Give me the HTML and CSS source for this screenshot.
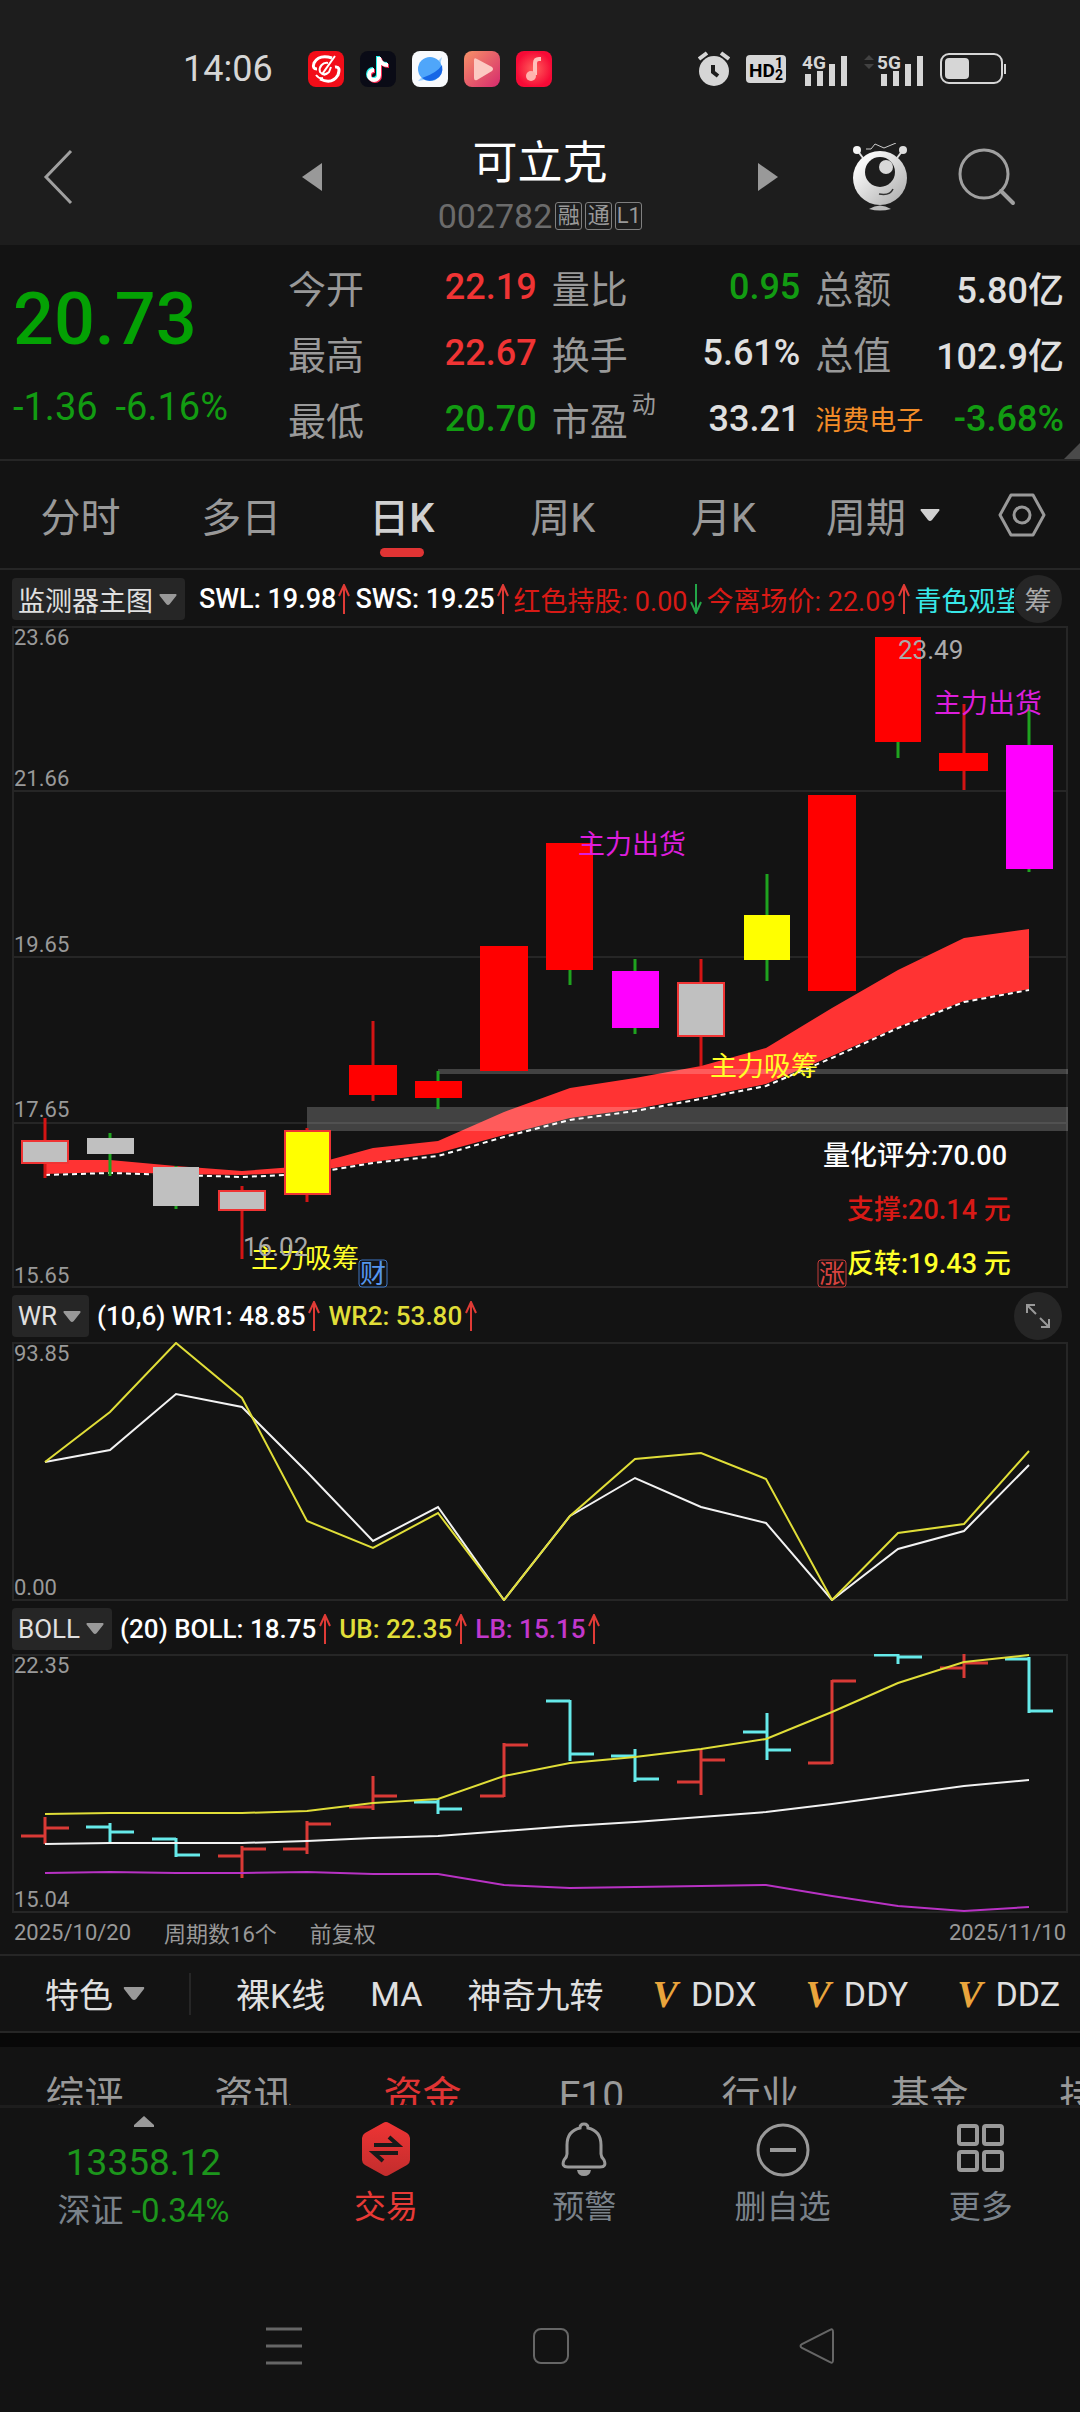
FILE: index.html
```
<!DOCTYPE html>
<html lang="zh-CN">
<head>
    <meta charset="UTF-8">
    <meta name="viewport" content="width=device-width, initial-scale=1.0">
    <title>可立克 002782</title>
    <link rel="stylesheet" href="styles.css">
</head>
<body>
    <!-- Shared icons -->
    <svg class="defs" width="0" height="0" aria-hidden="true">
        <symbol id="arrow-up" viewBox="0 0 12 30"><path d="M6 30V2M1 12L6 1l5 11" fill="none" stroke="#e03b36" stroke-width="2"/></symbol>
        <symbol id="arrow-down" viewBox="0 0 12 30"><path d="M6 0v28M1 18l5 11 5-11" fill="none" stroke="#23a648" stroke-width="2"/></symbol>
        <symbol id="caret" viewBox="0 0 20 12"><path d="M1 0h18q1 1 0 2l-7 9q-2 2-4 0L1 2q-1-1 0-2z" fill="currentColor"/></symbol>
    </svg>

    <div class="top">
        <div class="status">
            <span class="time">14:06</span>
            <div class="apps">
                <svg viewBox="0 0 36 36"><rect width="36" height="36" rx="8" fill="#f20d18"/><path d="M24 7Q11 3 6 12q-2 6 3 6M12 28q12 6 18-4 3-9-3-8" fill="none" stroke="#fff" stroke-width="3"/><path d="M27 5L15 22q1 3 4 0" fill="none" stroke="#fff" stroke-width="2"/><path d="M20 12a7 7 0 0 0-8 9q4 5 9 0l2-5M8 24q3 4 7 3" fill="none" stroke="#fff" stroke-width="2"/></svg>
                <svg viewBox="0 0 36 36"><rect width="36" height="36" rx="8" fill="#0a0b16"/><path d="M18 5v18a5 5 0 1 1-5-5M18 6q2 7 9 7" fill="none" stroke="#25f4ee" stroke-width="4"/><path d="M20 7v18a5 5 0 1 1-5-5M20 8q2 7 9 7" fill="none" stroke="#fe2c55" stroke-width="4"/><path d="M19 6v18a5 5 0 1 1-5-5M19 7q2 7 9 7" fill="none" stroke="#fff" stroke-width="4"/></svg>
                <svg viewBox="0 0 36 36"><rect width="36" height="36" rx="8" fill="#f8fafd"/><path d="M6 30L30 6l-3 12-9 10z" fill="#9fd0fb"/><circle cx="18" cy="18" r="12" fill="#4fa6fa"/><path d="M10 27Q25 22 30 14q2 10-6 14-7 4-14-1z" fill="#1667e6"/></svg>
                <svg viewBox="0 0 36 36"><defs><linearGradient id="g-video" x2="1" y2="1"><stop stop-color="#f79268"/><stop offset="1" stop-color="#d62a6d"/></linearGradient></defs><rect width="36" height="36" rx="8" fill="url(#g-video)"/><path d="M10 9q0-3 3-1l15 8q2 2 0 4l-15 9q-3 1-3-2z" fill="#fcc9c2"/></svg>
                <svg viewBox="0 0 36 36"><defs><radialGradient id="g-music"><stop stop-color="#ff625c"/><stop offset="1" stop-color="#f60a36"/></radialGradient></defs><rect width="36" height="36" rx="8" fill="url(#g-music)"/><path d="M25 8h-2q-4 0-4 4v12" fill="none" stroke="#ffc0bb" stroke-width="4"/><ellipse cx="15" cy="25" rx="5" ry="5" fill="#ffb3ae"/></svg>
            </div>
            <div class="signals">
                <svg width="32" height="36" viewBox="0 0 32 36"><circle cx="16" cy="20" r="15" fill="#d6d6d6"/><path d="M1 8l8-6M31 8l-8-6" stroke="#d6d6d6" stroke-width="4"/><path d="M15 14v7l5 4" fill="none" stroke="#1d1d1d" stroke-width="4"/></svg>
                <svg width="40" height="28" viewBox="0 0 40 28"><rect width="40" height="28" rx="4" fill="#d6d6d6"/><text x="3" y="22" class="hd">HD</text><text x="29" y="13" class="hd-sub">1</text><text x="29" y="25" class="hd-sub">2</text></svg>
                <svg width="46" height="36" viewBox="0 0 46 36"><text x="0" y="18" class="net">4G</text><path d="M6 23v12M18 20v15M30 13v22M42 5v30" stroke="#d6d6d6" stroke-width="6"/></svg>
                <svg width="60" height="36" viewBox="0 0 60 36"><path d="M0 9l5-5 5 5zM0 13h10l-5 5z" fill="#424242"/><text x="13" y="18" class="net">5G</text><path d="M20 23v12M32 20v15M44 13v22M56 5v30" stroke="#d6d6d6" stroke-width="6"/></svg>
                <svg width="67" height="32" viewBox="0 0 67 32"><rect x="1" y="1" width="61" height="29" rx="8" fill="none" stroke="#d6d6d6" stroke-width="2"/><rect x="5" y="5" width="24" height="21" rx="4" fill="#d6d6d6"/><path d="M65 11v10" stroke="#d6d6d6" stroke-width="2"/></svg>
            </div>
        </div>

        <header class="header">
            <button class="back" aria-label="返回"><svg width="30" height="56" viewBox="0 0 30 56"><path d="M28 2L3 28l25 26" fill="none" stroke="#a0a0a0" stroke-width="3"/></svg></button>
            <div class="switcher">
                <button aria-label="上一只"><svg width="20" height="28" viewBox="0 0 20 28"><path d="M20 0v28L0 14z" fill="#999"/></svg></button>
                <div class="stock">
                    <h1>可立克</h1>
                    <div class="code">002782 <span>融</span><span>通</span><span>L1</span></div>
                </div>
                <button aria-label="下一只"><svg width="20" height="28" viewBox="0 0 20 28"><path d="M0 0v28l20-14z" fill="#999"/></svg></button>
            </div>
            <div class="tools">
                <button aria-label="智能助手"><svg width="56" height="68" viewBox="0 0 56 68"><defs><linearGradient id="g-bot" x2="1" y2="1"><stop offset="0.2" stop-color="#f8f8f8"/><stop offset="1" stop-color="#a8a8a8"/></linearGradient></defs><path d="M5 7l6 8M51 7l-6 8" stroke="#ddd" stroke-width="2"/><path d="M14 6h5l4-5 9 4 12-5" fill="none" stroke="#ccc" stroke-width="1"/><circle cx="5" cy="7" r="4" fill="#f4f4f4"/><circle cx="51" cy="7" r="4" fill="#ddd"/><circle cx="28" cy="35" r="27" fill="url(#g-bot)"/><circle cx="28" cy="29" r="15" fill="#1d1d1d"/><circle cx="34" cy="24" r="7" fill="#d8d8d8"/><path d="M27 51q11 2 14-5" fill="none" stroke="#333" stroke-width="1.5"/><path d="M17 66q11-7 22 0-11 3-22 0z" fill="#bbb"/></svg></button>
                <button aria-label="搜索"><svg width="58" height="58" viewBox="0 0 58 58"><circle cx="26" cy="26" r="24" fill="none" stroke="#a0a0a0" stroke-width="3"/><path d="M43 43l12 12" stroke="#a0a0a0" stroke-width="4" stroke-linecap="round"/></svg></button>
            </div>
        </header>
    </div>

    <section class="quote">
        <div class="price">
            <div class="last">20.73</div>
            <div class="change"><span>-1.36</span><span>-6.16%</span></div>
        </div>
        <dl>
            <div><dt>今开</dt><dd class="up">22.19</dd></div>
            <div><dt>最高</dt><dd class="up">22.67</dd></div>
            <div><dt>最低</dt><dd class="down">20.70</dd></div>
        </dl>
        <dl>
            <div><dt>量比</dt><dd class="down">0.95</dd></div>
            <div><dt>换手</dt><dd>5.61%</dd></div>
            <div><dt>市盈<sup>动</sup></dt><dd>33.21</dd></div>
        </dl>
        <dl>
            <div><dt>总额</dt><dd>5.80亿</dd></div>
            <div><dt>总值</dt><dd>102.9亿</dd></div>
            <div><dt class="sector">消费电子</dt><dd class="down">-3.68%</dd></div>
        </dl>
        <span class="corner"></span>
    </section>

    <nav class="periods">
        <button>分时</button>
        <button>多日</button>
        <button class="active">日K</button>
        <button>周K</button>
        <button>月K</button>
        <button class="more-periods">周期 <svg width="24" height="12"><use href="#caret"/></svg></button>
        <button class="settings" aria-label="设置"><svg width="48" height="44" viewBox="0 0 48 44"><path d="M13 2h22l11 20-11 20H13L2 22z" fill="none" stroke="#999" stroke-width="3" stroke-linejoin="round"/><circle cx="24" cy="22" r="8" fill="none" stroke="#999" stroke-width="3"/></svg></button>
    </nav>

    <main class="charts">
        <div class="info main-info">
            <button class="pick">监测器主图<svg width="18" height="11"><use href="#caret"/></svg></button>
            <div class="values">
                <span class="white">SWL: 19.98<svg><use href="#arrow-up"/></svg></span>
                <span class="white">SWS: 19.25<svg><use href="#arrow-up"/></svg></span>
                <span class="red">红色持股: 0.00<svg><use href="#arrow-down"/></svg></span>
                <span class="red">今离场价: 22.09<svg><use href="#arrow-up"/></svg></span>
                <span class="cyan">青色观望</span>
            </div>
            <button class="round">筹</button>
        </div>

        <svg class="chart" viewBox="12 626 1056 662">
            <g class="grid">
                <rect x="13" y="627" width="1054" height="660"/>
                <path d="M12 791H1068M12 957H1068M12 1123H1068"/>
            </g>
            <g class="axis">
                <text x="14" y="645">23.66</text>
                <text x="14" y="786">21.66</text>
                <text x="14" y="952">19.65</text>
                <text x="14" y="1117">17.65</text>
                <text x="14" y="1283">15.65</text>
            </g>

            <!-- Trend band and its dashed lower edge -->
            <path fill="#ff3333" d="M45 1160L110 1160 176 1166 242 1171 307 1166 373 1148 438 1141 504 1112 570 1088 635 1078 701 1066 766 1048 832 1008 898 970 964 938 1029 929V989L964 1001 898 1027 832 1056 766 1084 701 1097 635 1109 570 1118 504 1135 438 1153 373 1162 307 1172 242 1175 176 1174 110 1172 45 1174z"/>
            <path class="zone" d="M307 1107H1068V1131H307zM438 1069H1068V1074H438z"/>
            <path fill="none" stroke="#fff" stroke-width="2" stroke-dasharray="5 4" d="M45 1175L110 1173 176 1175 242 1177 307 1174 373 1163 438 1156 504 1137 570 1120 635 1111 701 1099 766 1086 832 1058 898 1028 964 1002 1029 990"/>

            <!-- Wicks -->
            <path class="wick-up" d="M45 1118V1178M242 1186V1259M307 1128V1202M373 1021V1101M701 959V1066M964 704V790"/>
            <path class="wick-down" d="M110 1133V1176M176 1166V1209M438 1071V1109M570 843V985M635 959V1034M767 874V981M898 637V758M1029 705V872"/>

            <!-- Bodies -->
            <g class="gray">
                <rect class="up-edge" x="22" y="1141" width="46" height="22"/>
                <rect x="87" y="1138" width="47" height="16"/>
                <rect x="153" y="1167" width="46" height="39"/>
                <rect class="up-edge" x="219" y="1191" width="46" height="19"/>
                <rect class="up-edge" x="678" y="983" width="46" height="53"/>
            </g>
            <g class="yellow-body">
                <rect class="up-edge" x="285" y="1131" width="45" height="63"/>
                <rect x="744" y="915" width="46" height="45"/>
            </g>
            <g class="red-body">
                <rect x="349" y="1065" width="48" height="30"/>
                <rect x="415" y="1081" width="47" height="17"/>
                <rect x="480" y="946" width="48" height="125"/>
                <rect x="546" y="843" width="47" height="127"/>
                <rect x="808" y="795" width="48" height="196"/>
                <rect x="875" y="637" width="46" height="105"/>
                <rect x="939" y="753" width="49" height="18"/>
            </g>
            <g class="magenta-body">
                <rect x="612" y="971" width="47" height="57"/>
                <rect x="1006" y="745" width="47" height="124"/>
            </g>

            <g class="mark sell">
                <text x="578" y="854">主力出货</text>
                <text x="934" y="713">主力出货</text>
            </g>
            <g class="mark buy">
                <text x="251" y="1268">主力吸筹</text>
                <text x="710" y="1076">主力吸筹</text>
            </g>
            <g class="extreme">
                <text x="898" y="659">23.49</text>
                <text x="243" y="1256">16.02</text>
            </g>
            <g class="score">
                <text x="823" y="1165" fill="#fff">量化评分:70.00</text>
                <text x="847" y="1219" fill="#d81a16">支撑:20.14 元</text>
                <text x="847" y="1273" fill="#ffff29">反转:19.43 元</text>
            </g>
            <g class="event">
                <rect x="359" y="1260" width="28" height="27" rx="3" stroke="#3f77c4"/>
                <text x="360" y="1283" fill="#5596ee">财</text>
                <rect x="818" y="1260" width="28" height="27" rx="3" stroke="#c43c3a"/>
                <text x="819" y="1283" fill="#d8433f">涨</text>
            </g>
        </svg>

        <div class="info">
            <button class="pick">WR<svg width="18" height="11"><use href="#caret"/></svg></button>
            <div class="values">
                <span class="white">(10,6) WR1: 48.85<svg><use href="#arrow-up"/></svg></span>
                <span class="yellow">WR2: 53.80<svg><use href="#arrow-up"/></svg></span>
            </div>
            <button class="round" aria-label="全屏"><svg width="26" height="26" viewBox="0 0 26 26"><path d="M11 11L2 2M2 10V2h8M15 15l9 9M24 16v8h-8" fill="none" stroke="#999" stroke-width="2"/></svg></button>
        </div>

        <svg class="chart" viewBox="12 1342 1056 259">
            <g class="grid"><rect x="13" y="1343" width="1054" height="257"/></g>
            <g class="axis">
                <text x="14" y="1361">93.85</text>
                <text x="14" y="1595">0.00</text>
            </g>
            <polyline class="line" stroke="#f2f2f2" points="45,1462 110,1450 176,1394 242,1407 307,1472 373,1541 438,1507 504,1600 570,1516 635,1478 701,1507 766,1523 832,1600 898,1549 964,1531 1029,1465"/>
            <polyline class="line" stroke="#e0de38" points="45,1462 110,1412 176,1343 242,1398 307,1521 373,1548 438,1513 504,1600 570,1516 635,1459 701,1453 766,1479 832,1600 898,1533 964,1524 1029,1451"/>
        </svg>

        <div class="info boll-info">
            <button class="pick">BOLL<svg width="18" height="11"><use href="#caret"/></svg></button>
            <div class="values">
                <span class="white">(20) BOLL: 18.75<svg><use href="#arrow-up"/></svg></span>
                <span class="yellow">UB: 22.35<svg><use href="#arrow-up"/></svg></span>
                <span class="purple">LB: 15.15<svg><use href="#arrow-up"/></svg></span>
            </div>
        </div>

        <svg class="chart" viewBox="12 1654 1056 259">
            <g class="grid"><rect x="13" y="1655" width="1054" height="257"/></g>
            <g class="axis">
                <text x="14" y="1673">22.35</text>
                <text x="14" y="1907">15.04</text>
            </g>
            <!-- Open / high / low / close bars -->
            <path class="bar" stroke="#d93a36" d="M21 1836H45M45 1828H69M45 1817V1844M218 1856H242M242 1849H266M242 1846V1878M283 1849H307M307 1824H331M307 1821V1854M349 1807H373M373 1796H397M373 1776V1810M480 1796H504M504 1745H528M504 1743V1797M677 1782H701M701 1760H725M701 1749V1795M808 1763H832M832 1681H856M832 1680V1764M940 1668H964M964 1663H988M964 1654V1678"/>
            <path class="bar" stroke="#66eaea" d="M86 1827H110M110 1832H134M110 1823V1842M152 1839H176M176 1855H200M176 1838V1857M414 1802H438M438 1809H462M438 1799V1814M546 1701H570M570 1754H594M570 1700V1761M611 1756H635M635 1779H659M635 1749V1782M743 1732H767M767 1750H791M767 1713V1760M874 1655H898M898 1657H922M898 1654V1664M1005 1659H1029M1029 1711H1053M1029 1657V1713"/>
            <polyline class="line" stroke="#e0de38" points="45,1814 110,1813 242,1813 307,1811 373,1803 438,1799 504,1776 570,1763 635,1757 701,1749 766,1739 832,1712 898,1683 964,1662 1029,1655"/>
            <polyline class="line" stroke="#f2f2f2" points="45,1844 110,1843 242,1843 307,1841 373,1838 438,1836 504,1831 570,1826 635,1822 701,1817 766,1812 832,1804 898,1795 964,1786 1029,1780"/>
            <polyline class="line" stroke="#b832c4" points="45,1873 110,1872 176,1873 242,1873 307,1872 373,1874 438,1874 504,1885 570,1888 635,1887 701,1886 766,1885 832,1896 898,1906 964,1911 1029,1907"/>
        </svg>

        <div class="dates">
            <span>2025/10/20</span>
            <span>周期数16个</span>
            <span>前复权</span>
            <span class="end">2025/11/10</span>
        </div>
    </main>

    <div class="features">
        <button class="special">特色<svg width="22" height="13"><use href="#caret"/></svg></button>
        <button>裸K线</button>
        <button>MA</button>
        <button>神奇九转</button>
        <button><b>V</b>DDX</button>
        <button><b>V</b>DDY</button>
        <button><b>V</b>DDZ</button>
    </div>

    <nav class="sections">
        <a href="#">综评</a>
        <a href="#">资讯</a>
        <a href="#" class="active">资金</a>
        <a href="#">F10</a>
        <a href="#">行业</a>
        <a href="#">基金</a>
        <a href="#">持仓</a>
    </nav>

    <footer class="toolbar">
        <button class="index">
            <svg width="20" height="11" viewBox="0 0 20 11"><path d="M10 0l10 9v2H0V9z" fill="#999"/></svg>
            <span class="index-value">13358.12</span>
            <span class="index-change">深证 <em>-0.34%</em></span>
        </button>
        <button class="trade">
            <svg width="56" height="56" viewBox="0 0 56 56"><defs><linearGradient id="g-trade" x2="0" y2="1"><stop stop-color="#ee3434"/><stop offset="1" stop-color="#c22d2d"/></linearGradient></defs><path d="M25 2q3-2 6 0l18 10q3 2 3 5v22q0 3-3 5L31 54q-3 2-6 0L7 44q-3-2-3-5V17q0-3 3-5z" fill="url(#g-trade)"/><path d="M16 24h24l-9-8M40 32H16l9 8" fill="none" stroke="#191919" stroke-width="4"/></svg>
            交易
        </button>
        <button>
            <svg width="56" height="56" viewBox="0 0 56 56"><path d="M24 7q0-4 4-4t4 4q13 3 13 17v9q0 3 3 6 3 7-4 7H12q-7 0-4-7 3-3 3-6v-9Q11 10 24 7z" fill="none" stroke="#999" stroke-width="3"/><path d="M21 49h14q-1 6-7 6t-7-6z" fill="#999"/></svg>
            预警
        </button>
        <button>
            <svg width="56" height="56" viewBox="0 0 56 56"><circle cx="28" cy="29" r="25" fill="none" stroke="#999" stroke-width="3"/><path d="M15 29h26" stroke="#999" stroke-width="4"/></svg>
            删自选
        </button>
        <button>
            <svg width="56" height="56" viewBox="0 0 56 56"><g fill="none" stroke="#999" stroke-width="4"><rect x="6" y="5" width="18" height="18" rx="2"/><rect x="31" y="5" width="18" height="18" rx="2"/><rect x="6" y="31" width="18" height="18" rx="2"/><rect x="31" y="31" width="18" height="18" rx="2"/></g></svg>
            更多
        </button>
    </footer>

    <div class="system-nav">
        <button aria-label="任务"><svg width="36" height="38" viewBox="0 0 36 38"><path d="M0 2h36M0 19h36M0 36h36" stroke="#666" stroke-width="3"/></svg></button>
        <button aria-label="主页"><svg width="36" height="38" viewBox="0 0 36 38"><rect x="1" y="2" width="34" height="34" rx="7" fill="none" stroke="#666" stroke-width="2"/></svg></button>
        <button aria-label="后退"><svg width="36" height="38" viewBox="0 0 36 38"><path d="M31 3q3-2 3 2v28q0 4-3 2L3 21q-3-2 0-4z" fill="none" stroke="#666" stroke-width="2"/></svg></button>
    </div>
</body>
</html>
```
FILE: styles.css
```
* {
    box-sizing: border-box;
}
body {
    margin: 0;
    background-color: #131313;
    color: #e0e0e0;
    font-family: Roboto, "Noto Sans CJK SC", sans-serif;
    overflow-x: hidden;
}
button {
    padding: 0;
    border: none;
    background: none;
    color: inherit;
    font: inherit;
    white-space: nowrap;
    cursor: pointer;
}
a {
    color: inherit;
    text-decoration: none;
}
svg {
    display: block;
    flex: none;
}
.defs {
    position: absolute;
}
.up {
    color: #f03434;
}
.down {
    color: #129c12;
}
.white {
    color: #fff;
}
.red {
    color: #d81a16;
}
.cyan {
    color: #38e8e8;
}
.yellow {
    color: #e0de38;
}
.purple {
    color: #c238cc;
}

/* Status bar and title */
.top {
    background-color: #1d1d1d;
}
.status {
    display: flex;
    align-items: center;
    height: 110px;
    padding: 28px 73px 0 183px;
}
.time {
    margin-right: 35px;
    font-size: 36px;
    color: #d6d6d6;
}
.apps {
    display: flex;
    gap: 16px;
}
.apps svg {
    width: 36px;
    height: 36px;
}
.signals {
    display: flex;
    align-items: center;
    gap: 16px;
    margin-left: auto;
}
.hd {
    font-size: 19px;
    font-weight: 700;
}
.hd-sub {
    font-size: 14px;
    font-weight: 700;
}
.net {
    font-size: 19px;
    font-weight: 700;
    fill: #d6d6d6;
}
.header {
    display: grid;
    grid-template-columns: 1fr 476px 1fr;
    height: 135px;
    padding-top: 24px;
}
.back,
.tools,
.switcher button {
    display: flex;
    align-items: center;
    height: 86px;
}
.back {
    padding-left: 43px;
}
.switcher {
    display: flex;
    justify-content: space-between;
}
.stock {
    padding-top: 2px;
    text-align: center;
}
.stock h1 {
    margin: 0 0 4px;
    font-size: 45px;
    font-weight: 400;
    line-height: 56px;
    color: #fff;
}
.code {
    display: flex;
    align-items: center;
    gap: 3px;
    font-size: 34px;
    line-height: 40px;
    color: #6b6b6b;
}
.code span {
    width: 27px;
    height: 28px;
    border: 1px solid #808080;
    border-radius: 3px;
    font-size: 22px;
    line-height: 26px;
    color: #999;
}
.tools {
    justify-content: flex-end;
    gap: 50px;
    padding-right: 64px;
}

/* Quote */
.quote {
    position: relative;
    display: grid;
    grid-template-columns: 260px 1fr 1fr 1fr;
    gap: 15px;
    height: 216px;
    padding: 8px 16px 0 13px;
    border-bottom: 2px solid #262626;
}
.last {
    margin-top: 22px;
    font-size: 72px;
    font-weight: 500;
    line-height: 90px;
    color: #04a104;
}
.change {
    display: flex;
    gap: 18px;
    margin-top: 20px;
    font-size: 38px;
    line-height: 44px;
    color: #129c12;
}
dl {
    margin: 0;
}
dl div {
    display: flex;
    justify-content: space-between;
    align-items: center;
    height: 66px;
}
dt {
    position: relative;
    font-size: 38px;
    color: #999;
    white-space: nowrap;
}
dd {
    margin: 0;
    padding-top: 2px;
    font-size: 36px;
    font-weight: 500;
    white-space: nowrap;
}
sup {
    position: absolute;
    top: 0;
    left: 100%;
    padding-left: 4px;
    font-size: 24px;
    line-height: 28px;
}
.sector {
    font-size: 27px;
    color: #f28c28;
}
.corner {
    position: absolute;
    right: 0;
    bottom: 0;
    border-left: 16px solid transparent;
    border-bottom: 16px solid #4a4a4a;
}

/* Period tabs */
.periods {
    display: flex;
    height: 109px;
    border-bottom: 2px solid #262626;
    font-size: 40px;
    color: #999;
}
.periods button {
    position: relative;
    flex: 3;
}
.periods .active {
    color: #d0d0d0;
    font-weight: 500;
}
.periods .active::after {
    content: "";
    position: absolute;
    left: 50%;
    bottom: 11px;
    width: 44px;
    height: 9px;
    margin-left: -22px;
    border-radius: 5px;
    background-color: #e03434;
}
.periods .more-periods,
.periods .settings {
    display: flex;
    flex: none;
    justify-content: center;
    align-items: center;
    gap: 12px;
    width: 160px;
}
.more-periods svg {
    color: #d0d0d0;
}
.periods .settings {
    width: 116px;
}

/* Charts */
.charts {
    padding: 0 12px;
    border-bottom: 2px solid #262626;
}
.info {
    display: flex;
    align-items: center;
    height: 54px;
    padding-top: 2px;
    font-size: 26px;
}
.boll-info {
    height: 53px;
}
.main-info {
    height: 56px;
    font-size: 27px;
}
.main-info .values {
    gap: 5px;
    padding-left: 14px;
}
.pick {
    display: flex;
    align-items: center;
    gap: 6px;
    height: 42px;
    padding: 0 8px 0 6px;
    border-radius: 4px;
    background-color: #262626;
}
.pick svg {
    color: #999;
}
.values {
    display: flex;
    flex: 1;
    gap: 8px;
    min-width: 0;
    padding-left: 8px;
    overflow: hidden;
    font-weight: 500;
    white-space: nowrap;
}
.values span {
    display: flex;
    align-items: center;
    gap: 3px;
}
.main-info span {
    gap: 2px;
}
.values svg {
    width: 12px;
    height: 30px;
}
.values .red,
.values .cyan {
    font-weight: 400;
}
.round {
    display: flex;
    flex: none;
    justify-content: center;
    align-items: center;
    width: 48px;
    height: 48px;
    margin-right: 6px;
    border-radius: 50%;
    background-color: #262626;
    color: #aaa;
}
.chart {
    width: 100%;
    height: auto;
}
.grid {
    fill: none;
    stroke: #262626;
    stroke-width: 2;
}
.axis {
    font-size: 22px;
    fill: #999;
}
.line {
    fill: none;
    stroke-width: 2;
}
.bar {
    stroke-width: 3;
}
.zone {
    fill: #fff;
    fill-opacity: 0.2;
}
.wick-up {
    stroke: #d41414;
    stroke-width: 3;
}
.wick-down {
    stroke: #1fa31f;
    stroke-width: 3;
}
.gray {
    fill: #c0c0c0;
}
.yellow-body {
    fill: #ffff00;
}
.red-body {
    fill: #ff0000;
}
.magenta-body {
    fill: #ff00ff;
}
.up-edge {
    stroke: #f03434;
    stroke-width: 2;
}
.mark,
.score {
    font-size: 27px;
}
.score {
    font-weight: 500;
}
.sell {
    fill: #dc1edc;
}
.buy {
    fill: #ffff29;
}
.extreme {
    font-size: 26px;
    fill: #aaa;
}
.event {
    font-size: 26px;
}
.event rect {
    fill: #131313;
    stroke-width: 1;
}
.dates {
    display: flex;
    align-items: center;
    gap: 33px;
    height: 41px;
    padding: 0 2px 3px;
    font-size: 22px;
    color: #999;
}
.dates .end {
    margin-left: auto;
}

/* Indicator shortcuts */
.features {
    display: flex;
    align-items: center;
    gap: 45px;
    height: 77px;
    padding-left: 45px;
    border-bottom: 2px solid #262626;
    font-size: 34px;
}
.features button {
    display: flex;
    align-items: center;
    gap: 13px;
}
.features .special {
    gap: 10px;
    height: 42px;
    padding-right: 44px;
    border-right: 2px solid #262626;
}
.special svg {
    color: #999;
}
.features b {
    margin-left: 4px;
    font-family: "Liberation Serif", serif;
    font-size: 38px;
    font-style: italic;
    color: #eaa53c;
}

/* Section tabs, cut off by the toolbar */
.sections {
    display: grid;
    grid-auto-columns: 169px;
    grid-auto-flow: column;
    height: 72px;
    border-top: 14px solid #080808;
    overflow: hidden;
    font-size: 39px;
    line-height: 54px;
    text-align: center;
    color: #999;
}
.sections a {
    padding-top: 22px;
}
.sections .active {
    color: #e03434;
}

/* Bottom toolbar */
.toolbar {
    display: flex;
    height: 176px;
    border-top: 3px solid #1d1d1d;
    font-size: 32px;
    line-height: 44px;
    color: #7a828a;
}
.toolbar button {
    display: flex;
    flex: 1;
    flex-direction: column;
    align-items: center;
    padding-top: 13px;
}
.toolbar button svg {
    margin-bottom: 8px;
}
.toolbar .trade {
    color: #e83a36;
}
.toolbar .index {
    flex: none;
    width: 287px;
    padding-top: 8px;
}
.toolbar .index svg {
    margin-bottom: 14px;
}
.index-value {
    margin-bottom: 4px;
    font-size: 37px;
    color: #1c961c;
}
.index-change {
    font-size: 33px;
}
.index em {
    font-style: normal;
    color: #1c961c;
}

/* System navigation */
.system-nav {
    display: flex;
    justify-content: space-around;
    height: 131px;
    padding: 0 12% 0 14%;
}
.system-nav button {
    display: flex;
    padding-top: 46px;
}
```
